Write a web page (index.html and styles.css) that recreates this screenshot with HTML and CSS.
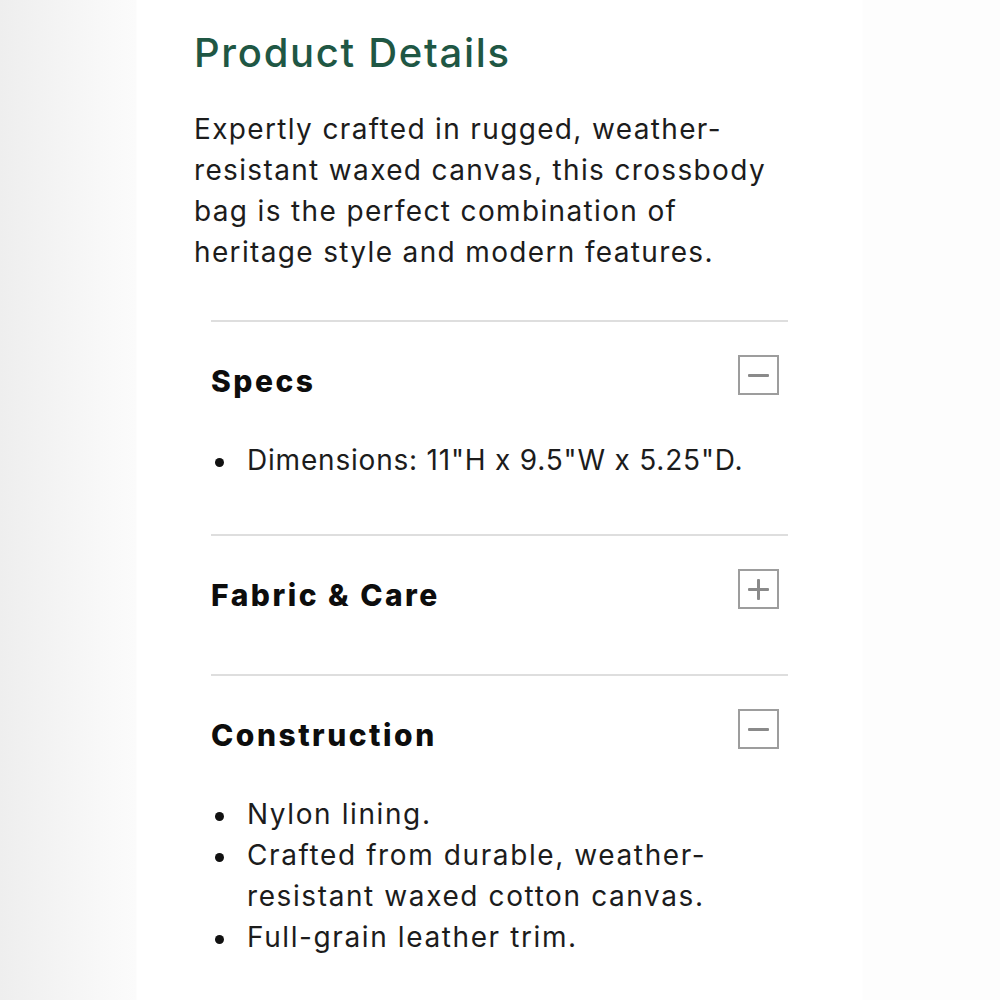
FILE: index.html
```html
<!DOCTYPE html>
<html lang="en">
<head>
<meta charset="utf-8">
<title>Product Details</title>
<link rel="stylesheet" href="styles.css">
</head>
<body>
<main class="page">
  <section class="details">
    <h1 class="title">Product Details</h1>
    <p class="intro">Expertly crafted in rugged, weather-<br>resistant waxed canvas, this crossbody<br>bag is the perfect combination of<br>heritage style and modern features.</p>
    <div class="accordion">
      <div class="item">
        <div class="head">
          <h2 class="name">Specs</h2>
          <span class="toggle"><span class="bar"></span></span>
        </div>
        <ul class="list">
          <li class="numeric">Dimensions: 11"H x 9.5"W x 5.25"D.</li>
        </ul>
      </div>
      <div class="item">
        <div class="head">
          <h2 class="name">Fabric &amp; Care</h2>
          <span class="toggle"><span class="bar"></span><span class="bar vert"></span></span>
        </div>
      </div>
      <div class="item">
        <div class="head">
          <h2 class="name">Construction</h2>
          <span class="toggle"><span class="bar"></span></span>
        </div>
        <ul class="list">
          <li>Nylon lining.</li>
          <li>Crafted from durable, weather-<br>resistant waxed cotton canvas.</li>
          <li>Full-grain leather trim.</li>
        </ul>
      </div>
    </div>
  </section>
</main>
</body>
</html>
```

FILE: styles.css
```css
* { box-sizing: border-box; }

html, body {
  margin: 0;
  padding: 0;
}

body {
  width: 1000px;
  min-height: 1000px;
  font-family: Inter, "Open Sans", "DejaVu Sans", sans-serif;
  color: #1c1c1c;
  background: linear-gradient(to right,
    #eeeeee 0px, #f2f2f2 40px, #f8f8f8 100px, #fbfbfb 136px,
    #ffffff 137px, #ffffff 862px, #fdfdfd 863px, #fdfdfd 1000px);
}

.page {
  display: flex;
  min-height: 1000px;
}

.details {
  padding: 29px 0 0 194px;
  width: 790px;
}

.title {
  margin: 0;
  font-size: 40px;
  line-height: 48px;
  font-weight: 500;
  color: #1f5744;
  letter-spacing: 1.7px;
}

.intro {
  margin: 32px 0 0;
  font-size: 28px;
  line-height: 41px;
  font-weight: 400;
  letter-spacing: 1.35px;
  white-space: nowrap;
}

.accordion {
  margin: 47px 0 0 17px;
  width: 577px;
}

.item {
  border-top: 2px solid #dedede;
  padding: 33px 0 53px;
}

.head {
  display: flex;
  justify-content: space-between;
  align-items: flex-start;
  padding-right: 9px;
}

.name {
  margin: 0;
  font-size: 30px;
  line-height: 52px;
  font-weight: 800;
  color: #0d0d0d;
  letter-spacing: 2.5px;
}

.toggle {
  position: relative;
  width: 41px;
  height: 40px;
  border: 2px solid #9d9d9d;
  display: flex;
  align-items: center;
  justify-content: center;
}

.bar {
  display: block;
  width: 21px;
  height: 3px;
  background: #8a8a8a;
  border-radius: 1px;
}

.bar.vert {
  position: absolute;
  width: 3px;
  height: 21px;
}

.list {
  margin: 33px 0 0;
  padding: 0 0 0 36px;
  font-size: 28px;
  line-height: 41px;
  letter-spacing: 1.6px;
  white-space: nowrap;
  list-style: none;
}

.list li {
  position: relative;
}

.list li::before {
  content: "";
  position: absolute;
  left: -32px;
  top: 18px;
  width: 9px;
  height: 9px;
  border-radius: 50%;
  background: #111;
}

.list .numeric {
  letter-spacing: 0.8px;
}
```
